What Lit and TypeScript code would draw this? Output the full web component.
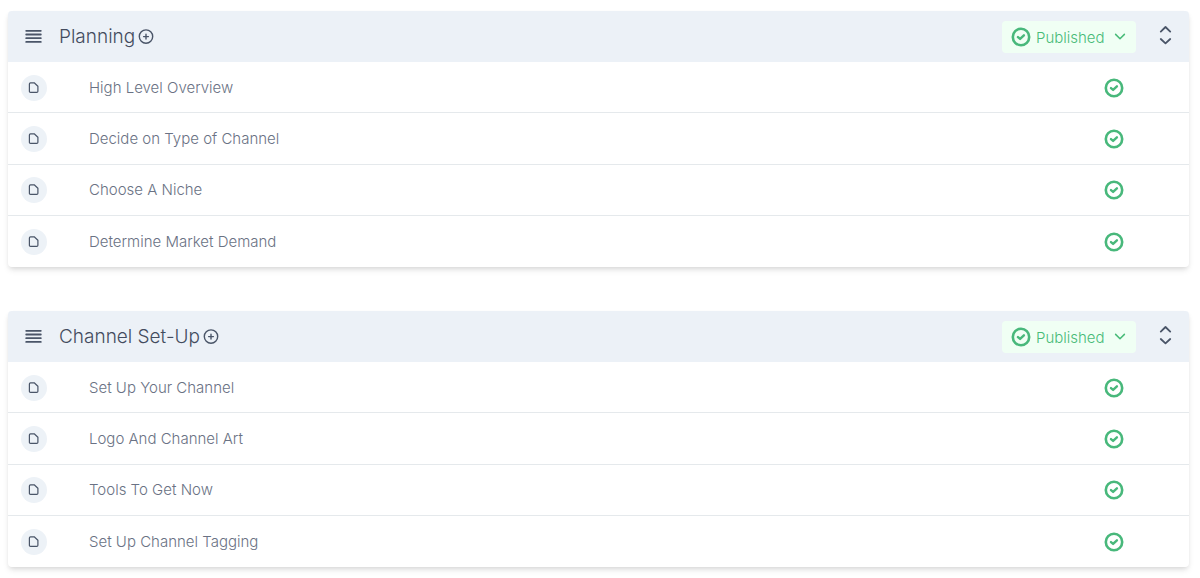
import { LitElement, html, css, svg } from "lit";
import { customElement, property } from "lit/decorators.js";

const checkBadge = html`<svg class="check" viewBox="0 0 20 20" aria-hidden="true">
  <circle cx="10" cy="10" r="8.2" fill="none" stroke="currentColor" stroke-width="2.6" />
  <path d="M7 10.1 9.1 11.9 12.9 8.3" fill="none" stroke="currentColor" stroke-width="2.4" stroke-linecap="round" stroke-linejoin="round" />
</svg>`;

@customElement("lesson-section")
class LessonSection extends LitElement {
  @property() heading = "";
  @property({ attribute: false }) lessons: string[] = [];

  static styles = css`
    :host {
      display: block;
      border-radius: 4px;
      background: #fff;
      box-shadow: 0 4px 6px -1px rgba(0, 0, 0, 0.1), 0 2px 4px -1px rgba(0, 0, 0, 0.08);
    }
    svg {
      display: block;
      flex: none;
    }
    button {
      border: 0;
      padding: 0;
      background: none;
      color: inherit;
      font: inherit;
      cursor: pointer;
    }
    header {
      display: flex;
      align-items: center;
      height: 51px;
      padding: 0 16px 0 17px;
      border-radius: 4px 4px 0 0;
      background: #ecf1f7;
      color: #4a5568;
    }
    h2 {
      margin: 0 3px 0 17px;
      font-size: 19px;
      line-height: 28px;
      font-weight: 300;
      color: #434c5e;
    }
    .grip {
      width: 17px;
      height: 17px;
    }
    .add svg {
      width: 16px;
      height: 16px;
    }
    .status {
      position: relative;
      display: flex;
      align-items: center;
      height: 32px;
      margin-left: auto;
      border-radius: 4px;
      background: #f0fff4;
      color: #48bb78;
    }
    .status .check {
      position: absolute;
      left: 9px;
      pointer-events: none;
    }
    .status .chevron {
      position: absolute;
      right: 10px;
      width: 12px;
      height: 12px;
      pointer-events: none;
    }
    select {
      appearance: none;
      width: 134px;
      height: 32px;
      margin: 0;
      padding: 2px 24px 0 34px;
      border: 0;
      border-radius: 4px;
      background: transparent;
      color: inherit;
      font: inherit;
      font-size: 15px;
    }
    .check {
      width: 20px;
      height: 20px;
      color: #48b87b;
    }
    .sort {
      margin-left: 21px;
    }
    .sort svg {
      width: 16px;
      height: 22px;
    }
    ul {
      display: grid;
      grid-auto-rows: 1fr;
      min-height: 205px;
      margin: 0;
      padding: 0;
      list-style: none;
    }
    li {
      display: flex;
      align-items: center;
      padding: 1px 65px 0 13px;
      border-bottom: 1px solid #e5e9ec;
      color: #6a7284;
      font-size: 15px;
      line-height: 24px;
    }
    li:last-child {
      border-bottom: 0;
    }
    li .check {
      margin-left: auto;
    }
    .doc {
      display: grid;
      place-items: center;
      width: 26px;
      height: 26px;
      margin-right: 42px;
      border-radius: 50%;
      background: #edf2f7;
      color: #4a5568;
    }
    .doc svg {
      width: 12px;
      height: 12px;
    }
  `;

  render() {
    return html`
      <header>
        <button class="drag" aria-label="Reorder section">
          <svg class="grip" viewBox="0 0 17 17">
            ${[2.8, 6.5, 10.2, 13.9].map((y) => svg`<path d=${`M1.2 ${y}H15.8`} stroke="currentColor" stroke-width="1.8" stroke-linecap="round" />`)}
          </svg>
        </button>
        <h2>${this.heading}</h2>
        <button class="add" aria-label="Add lesson">
          <svg viewBox="0 0 16 16" fill="none" stroke="currentColor" stroke-width="1.4" stroke-linecap="round">
            <circle cx="8" cy="7.6" r="6.7" />
            <path d="M8 5.2v4.8M5.6 7.6h4.8" />
          </svg>
        </button>
        <div class="status">
          ${checkBadge}
          <select aria-label="Section status">
            <option>Published</option>
          </select>
          <svg class="chevron" viewBox="0 0 12 12" fill="none" stroke="currentColor" stroke-width="1.5" stroke-linecap="round" stroke-linejoin="round">
            <path d="M1.6 3.4 6 7.8 10.4 3.4" />
          </svg>
        </div>
        <button class="sort" aria-label="Collapse section">
          <svg viewBox="0 0 16 22" fill="none" stroke="currentColor" stroke-width="1.8" stroke-linecap="round" stroke-linejoin="round">
            <path d="M3.8 5.6 8.5 1 13.2 5.6M3.8 13 8.5 17.4 13.2 13" />
          </svg>
        </button>
      </header>
      <ul>
        ${this.lessons.map(
          (lesson) => html`<li>
            <span class="doc">
              <svg viewBox="0 0 12 12" fill="none" stroke="currentColor" stroke-width="1.2" stroke-linejoin="round">
                <path d="M2.4 0.8H6.2L9.9 4.2V9.2Q9.9 10.4 8.7 10.4H2.6Q1.4 10.4 1.4 9.2V2Q1.4 0.8 2.6 0.8Z" />
              </svg>
            </span>
            <span>${lesson}</span>
            ${checkBadge}
          </li>`
        )}
      </ul>
    `;
  }
}

@customElement("app-root")
class AppRoot extends LitElement {
  static styles = css`
    :host {
      display: flex;
      flex-direction: column;
      gap: 44px;
      padding: 11px 11px 9px 8px;
      background: #fff;
      font-family: Inter, "Liberation Sans", sans-serif;
      font-weight: 300;
    }
  `;

  render() {
    return html`
      <lesson-section
        heading="Planning"
        .lessons=${["High Level Overview", "Decide on Type of Channel", "Choose A Niche", "Determine Market Demand"]}
      ></lesson-section>
      <lesson-section
        heading="Channel Set-Up"
        .lessons=${["Set Up Your Channel", "Logo And Channel Art", "Tools To Get Now", "Set Up Channel Tagging"]}
      ></lesson-section>
    `;
  }
}
